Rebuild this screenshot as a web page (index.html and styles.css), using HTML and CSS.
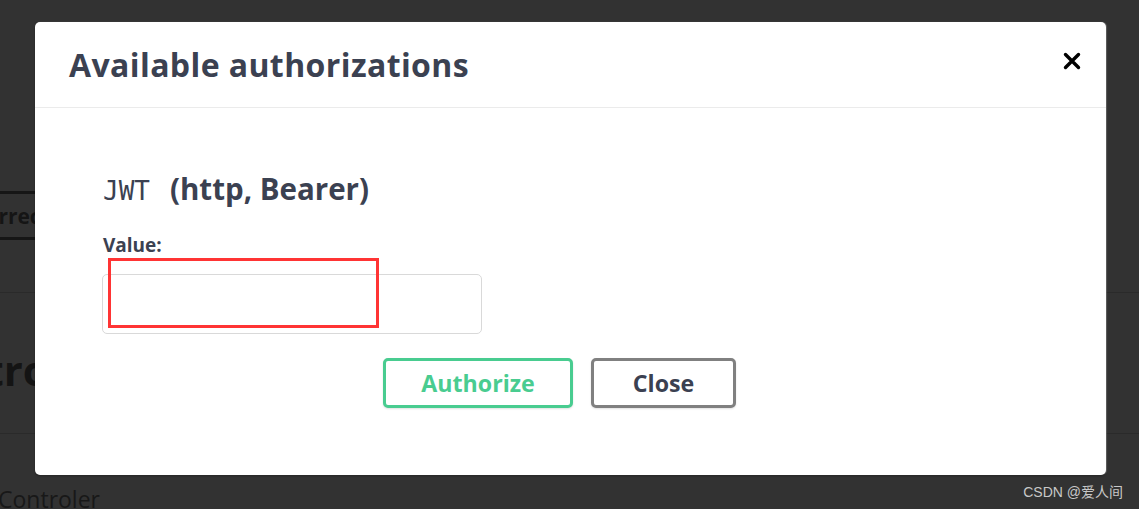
FILE: index.html
```html
<!DOCTYPE html>
<html>
<head>
<meta charset="utf-8">
<link rel="stylesheet" href="styles.css">
</head>
<body>
<div class="page">
  <div class="tab-btn"><span class="tab-text">Correct</span></div>
  <div class="section">
    <h2 class="big-title">Intro</h2>
  </div>
  <div class="controller">Controler</div>
</div>

<div class="modal">
  <div class="modal-header">
    <h3 class="modal-title">Available authorizations</h3>
    <button class="close-x" aria-label="close">
      <svg width="18" height="18" viewBox="0 0 18 18"><path d="M2.5 2.5 L15.5 15.5 M15.5 2.5 L2.5 15.5" stroke="#000" stroke-width="3.4" stroke-linecap="round"/></svg>
    </button>
  </div>
  <div class="modal-body">
    <h4 class="scheme"><code class="scheme-name">JWT</code><span class="scheme-type">(http, Bearer)</span></h4>
    <label class="value-label">Value:</label>
    <div class="input-box"></div>
    <div class="btn-row">
      <button class="btn btn-auth">Authorize</button>
      <button class="btn btn-close">Close</button>
    </div>
  </div>
</div>

<div class="annotation"></div>
<div class="watermark">CSDN @爱人间</div>
</body>
</html>
```

FILE: styles.css
```css
html, body {
  margin: 0;
  padding: 0;
}
body {
  width: 1139px;
  height: 509px;
  overflow: hidden;
  background: #323232;
  font-family: "Open Sans", "Noto Sans", sans-serif;
  position: relative;
}

.page {
  padding-top: 191px;
}
.tab-btn {
  width: 200px;
  height: 43px;
  border-top: 3px solid #161616;
  border-bottom: 3px solid #161616;
  margin-left: -28px;
  display: flex;
  align-items: center;
}
.tab-text {
  font-size: 21px;
  font-weight: 700;
  color: #151515;
}
.section {
  margin-top: 52px;
  border-top: 1px solid #2a2a2a;
  border-bottom: 1px solid #2a2a2a;
  height: 140px;
  display: flex;
  align-items: center;
}
.big-title {
  margin: 12px 0 0 -56px;
  font-size: 42px;
  font-weight: 700;
  color: #141414;
}
.controller {
  margin-top: 50px;
  margin-left: -2px;
  font-size: 23px;
  color: #181818;
  line-height: 30px;
}

.modal {
  position: absolute;
  left: 35px;
  top: 22px;
  width: 1071px;
  height: 453px;
  background: #fff;
  border-radius: 5px;
  box-shadow: 0 1px 2px rgba(0,0,0,0.35), 1px 0 1px rgba(160,160,160,0.5);
  color: #3b4151;
}
.modal-header {
  height: 85px;
  border-bottom: 1px solid #ebebeb;
  display: flex;
  align-items: center;
  justify-content: space-between;
  padding: 0 25px 0 34px;
}
.modal-title {
  margin: 0;
  font-size: 32px;
  font-weight: 700;
  color: #3b4151;
  letter-spacing: 0.4px;
}
.close-x {
  border: none;
  background: none;
  padding: 0;
  width: 18px;
  height: 18px;
  margin-top: -8px;
}
.modal-body {
  padding: 0 68px;
}
.scheme {
  margin: 63px 0 0 0;
  font-size: 29.5px;
  font-weight: 700;
  color: #3b4151;
  height: 36px;
  line-height: 36px;
  display: flex;
  align-items: baseline;
}
.scheme-name {
  font-family: "DejaVu Sans Mono", monospace;
  font-size: 26px;
  font-weight: 400;
}
.scheme-type {
  margin-left: 20px;
}
.value-label {
  display: block;
  margin-top: 25px;
  font-size: 19px;
  font-weight: 700;
  color: #3b4151;
  line-height: 26px;
}
.input-box {
  margin-top: 16px;
  margin-left: -1px;
  width: 378px;
  height: 58px;
  border: 1px solid #d9d9d9;
  border-radius: 5px;
}
.btn-row {
  display: flex;
  justify-content: center;
  gap: 18px;
  margin-top: 24px;
  padding-right: 22px;
}
.btn {
  height: 50px;
  border-radius: 5px;
  background: #fff;
  font-family: "Open Sans", "Noto Sans", sans-serif;
  font-size: 23.2px;
  font-weight: 700;
  padding: 0;
  box-shadow: 0 1px 2px rgba(0,0,0,0.12);
}
.btn-auth {
  width: 190px;
  border: 3px solid #49cc90;
  color: #49cc90;
}
.btn-close {
  width: 145px;
  border: 3px solid #808080;
  color: #3b4151;
}

.annotation {
  position: absolute;
  left: 108px;
  top: 258px;
  width: 265px;
  height: 64px;
  border: 3px solid #ff3434;
}
.watermark {
  position: absolute;
  right: 16px;
  top: 481px;
  font-family: "Liberation Sans", "Noto Sans CJK SC", sans-serif;
  font-size: 14px;
  color: #c8c8c8;
}
```
